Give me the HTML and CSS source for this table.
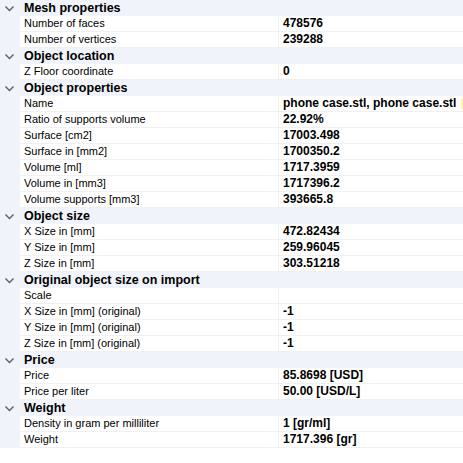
FILE: index.html
```html
<!DOCTYPE html>
<html>
<head>
<meta charset="utf-8">
<link rel="stylesheet" href="styles.css">
</head>
<body>
<div class="grid">
  <div class="cat"><span class="chev"><svg width="9" height="6" viewBox="0 0 9 6"><path d="M0.5 0.5 L4.5 4.5 L8.5 0.5" fill="none" stroke="#5a5a5a" stroke-width="1.3"/></svg></span><span class="cat-name">Mesh properties</span></div>
  <div class="row"><span class="gut"></span><span class="name">Number of faces</span><span class="val">478576</span></div>
  <div class="row"><span class="gut"></span><span class="name">Number of vertices</span><span class="val">239288</span></div>

  <div class="cat"><span class="chev"><svg width="9" height="6" viewBox="0 0 9 6"><path d="M0.5 0.5 L4.5 4.5 L8.5 0.5" fill="none" stroke="#5a5a5a" stroke-width="1.3"/></svg></span><span class="cat-name">Object location</span></div>
  <div class="row"><span class="gut"></span><span class="name">Z Floor coordinate</span><span class="val">0</span></div>

  <div class="cat"><span class="chev"><svg width="9" height="6" viewBox="0 0 9 6"><path d="M0.5 0.5 L4.5 4.5 L8.5 0.5" fill="none" stroke="#5a5a5a" stroke-width="1.3"/></svg></span><span class="cat-name">Object properties</span></div>
  <div class="row"><span class="gut"></span><span class="name">Name</span><span class="val">phone case.stl, phone case.stl<span class="mark"></span></span></div>
  <div class="row"><span class="gut"></span><span class="name">Ratio of supports volume</span><span class="val">22.92%</span></div>
  <div class="row"><span class="gut"></span><span class="name">Surface [cm2]</span><span class="val">17003.498</span></div>
  <div class="row"><span class="gut"></span><span class="name">Surface in [mm2]</span><span class="val">1700350.2</span></div>
  <div class="row"><span class="gut"></span><span class="name">Volume [ml]</span><span class="val">1717.3959</span></div>
  <div class="row"><span class="gut"></span><span class="name">Volume in [mm3]</span><span class="val">1717396.2</span></div>
  <div class="row"><span class="gut"></span><span class="name">Volume supports [mm3]</span><span class="val">393665.8</span></div>

  <div class="cat"><span class="chev"><svg width="9" height="6" viewBox="0 0 9 6"><path d="M0.5 0.5 L4.5 4.5 L8.5 0.5" fill="none" stroke="#5a5a5a" stroke-width="1.3"/></svg></span><span class="cat-name">Object size</span></div>
  <div class="row"><span class="gut"></span><span class="name">X Size in [mm]</span><span class="val">472.82434</span></div>
  <div class="row"><span class="gut"></span><span class="name">Y Size in [mm]</span><span class="val">259.96045</span></div>
  <div class="row"><span class="gut"></span><span class="name">Z Size in [mm]</span><span class="val">303.51218</span></div>

  <div class="cat"><span class="chev"><svg width="9" height="6" viewBox="0 0 9 6"><path d="M0.5 0.5 L4.5 4.5 L8.5 0.5" fill="none" stroke="#5a5a5a" stroke-width="1.3"/></svg></span><span class="cat-name">Original object size on import</span></div>
  <div class="row"><span class="gut"></span><span class="name">Scale</span><span class="val"></span></div>
  <div class="row"><span class="gut"></span><span class="name">X Size in [mm] (original)</span><span class="val">-1</span></div>
  <div class="row"><span class="gut"></span><span class="name">Y Size in [mm] (original)</span><span class="val">-1</span></div>
  <div class="row"><span class="gut"></span><span class="name">Z Size in [mm] (original)</span><span class="val">-1</span></div>

  <div class="cat"><span class="chev"><svg width="9" height="6" viewBox="0 0 9 6"><path d="M0.5 0.5 L4.5 4.5 L8.5 0.5" fill="none" stroke="#5a5a5a" stroke-width="1.3"/></svg></span><span class="cat-name">Price</span></div>
  <div class="row"><span class="gut"></span><span class="name">Price</span><span class="val">85.8698 [USD]</span></div>
  <div class="row"><span class="gut"></span><span class="name">Price per liter</span><span class="val">50.00 [USD/L]</span></div>

  <div class="cat"><span class="chev"><svg width="9" height="6" viewBox="0 0 9 6"><path d="M0.5 0.5 L4.5 4.5 L8.5 0.5" fill="none" stroke="#5a5a5a" stroke-width="1.3"/></svg></span><span class="cat-name">Weight</span></div>
  <div class="row"><span class="gut"></span><span class="name">Density in gram per milliliter</span><span class="val">1 [gr/ml]</span></div>
  <div class="row"><span class="gut"></span><span class="name">Weight</span><span class="val">1717.396 [gr]</span></div>
</div>
</body>
</html>
```

FILE: styles.css
```css
html, body {
  margin: 0;
  padding: 0;
  background: #ffffff;
}
body {
  width: 463px;
  height: 463px;
  overflow: hidden;
  font-family: "Liberation Sans", Arial, sans-serif;
  color: #000;
}
.grid {
  display: flex;
  flex-direction: column;
}
.cat {
  display: flex;
  align-items: center;
  height: 16px;
  background: #f0f3f9;
}
.chev {
  width: 24px;
  display: flex;
  align-items: center;
  padding-left: 5px;
  box-sizing: border-box;
  height: 16px;
}
.chev svg { display: block; margin-top: 1px; }
.cat-name {
  font-weight: bold;
  font-size: 12.5px;
  line-height: 16px;
  white-space: nowrap;
}
.row {
  display: flex;
  height: 16px;
}
.gut {
  width: 20px;
  flex: none;
  background: #f0f3f9;
}
.name {
  width: 259px;
  flex: none;
  box-sizing: border-box;
  padding-left: 4px;
  font-size: 11px;
  line-height: 15px;
  height: 16px;
  border-bottom: 1px solid #f0f0f0;
  border-right: 1px solid #f0f0f0;
  white-space: nowrap;
  overflow: hidden;
}
.val {
  flex: 1;
  box-sizing: border-box;
  padding-left: 4px;
  font-size: 12px;
  font-weight: bold;
  line-height: 15px;
  height: 16px;
  border-bottom: 1px solid #f0f0f0;
  white-space: nowrap;
  overflow: hidden;
  position: relative;
}
.mark {
  position: absolute;
  right: 0;
  top: 3px;
  width: 2px;
  height: 10px;
  background: #fff4a8;
}
```
